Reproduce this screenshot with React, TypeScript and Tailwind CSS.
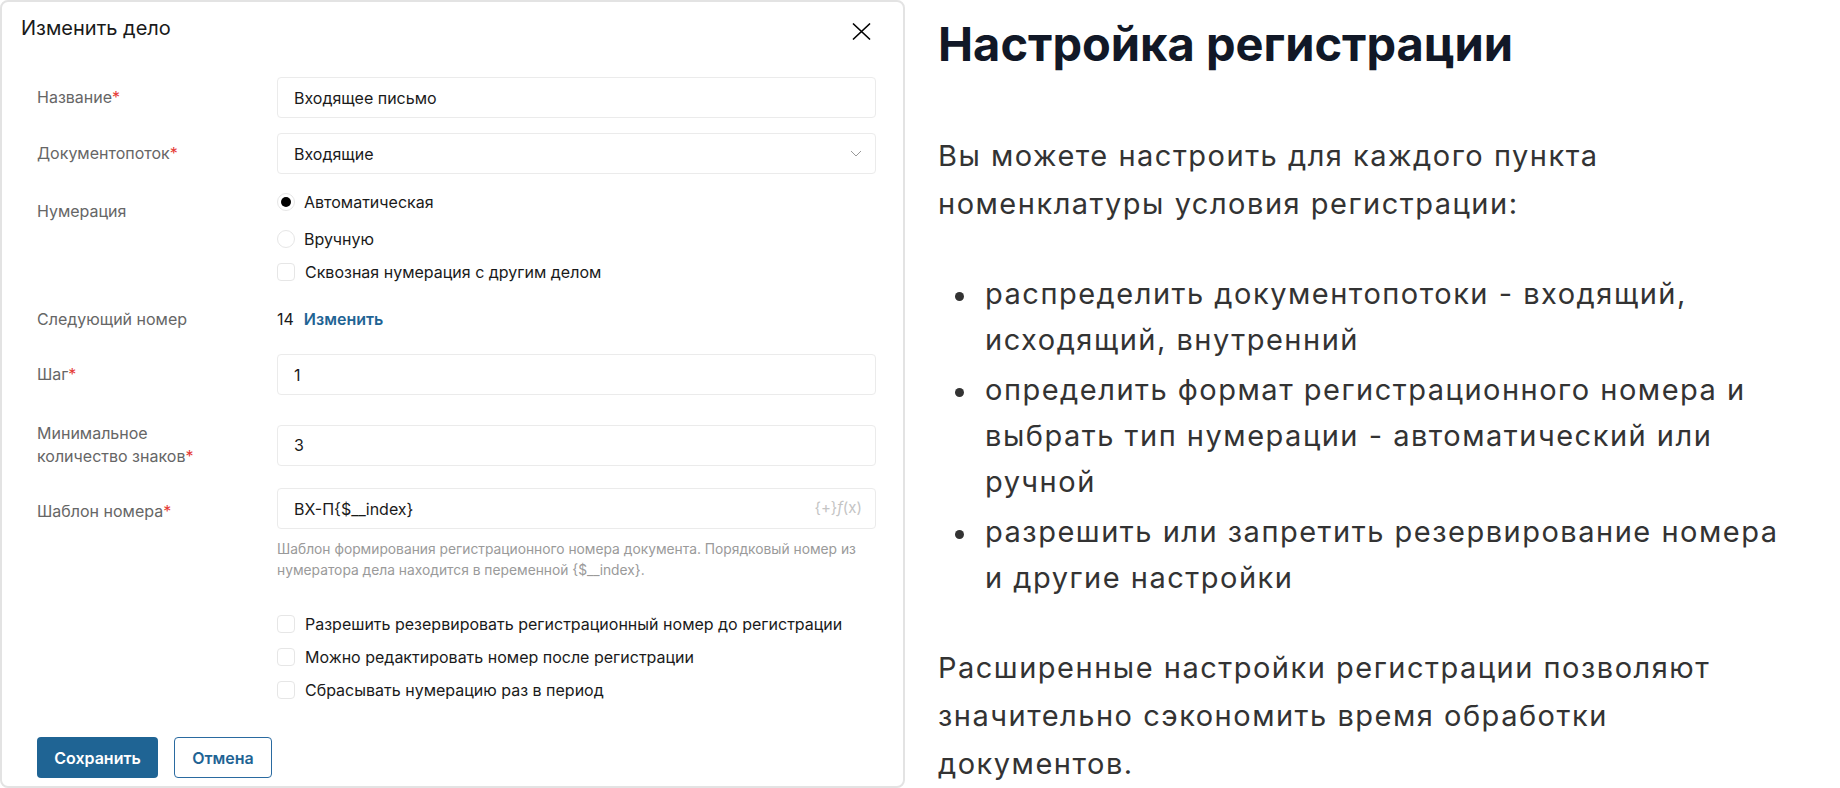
import React from "react";

type FieldProps = {
  label: React.ReactNode;
  required?: boolean;
  className?: string;
  labelClass?: string;
  align?: string;
  children: React.ReactNode;
};

function Field({ label, required, className = "", labelClass = "", align = "items-center", children }: FieldProps) {
  return (
    <div className={`flex ${align} ${className}`}>
      <div className={`w-[240px] shrink-0 text-[16px] leading-[23px] text-[#666666] ${labelClass}`}>
        {label}
        {required && <span className="text-[#e53935]">*</span>}
      </div>
      <div className="min-w-0 flex-1">{children}</div>
    </div>
  );
}

function TextBox({ value, children }: { value: string; children?: React.ReactNode }) {
  return (
    <div className="flex h-[41px] items-center justify-between rounded border border-[#ebebeb] pl-4 pr-[13px] text-[16px] text-[#1a1a1a]">
      <span>{value}</span>
      {children}
    </div>
  );
}

function Check({ label }: { label: string }) {
  return (
    <div className="flex h-6 items-center gap-[10px]">
      <span className="h-[18px] w-[18px] rounded-sm border border-[#e6e6e6] bg-white" />
      <span className="text-[16px] text-[#1a1a1a]">{label}</span>
    </div>
  );
}

function Radio({ label, checked }: { label: string; checked?: boolean }) {
  return (
    <div className="flex h-6 items-center gap-[9px]">
      <span className="flex h-[18px] w-[18px] items-center justify-center rounded-full border border-[#e6e6e6] bg-white">
        {checked && <span className="h-[10px] w-[10px] rounded-full bg-black" />}
      </span>
      <span className="text-[16px] text-[#1a1a1a]">{label}</span>
    </div>
  );
}

const bullets = [
  ["распределить документопотоки - входящий,", "исходящий, внутренний"],
  ["определить формат регистрационного номера и", "выбрать тип нумерации - автоматический или", "ручной"],
  ["разрешить или запретить резервирование номера", "и другие настройки"],
];

export default function App() {
  return (
    <div className="flex h-[788px] w-[1840px] bg-white font-['Inter','Noto_Sans',sans-serif]">
      {/* Модальное окно */}
      <div className="flex h-[788px] w-[905px] shrink-0 flex-col rounded-lg border-2 border-[#e3e3e3] bg-white">
        <div className="flex items-start justify-between pl-[19px] pr-[32px] pt-3">
          <h2 className="text-[20px] leading-[28px] text-[#1a1a1a]">Изменить дело</h2>
          <button className="mt-[9px] text-black">
            <svg width="19" height="17" viewBox="0 0 19 17" fill="none" stroke="currentColor" strokeWidth="1.7" strokeLinecap="round">
              <path d="M1.5 1 17.5 16M17.5 1 1.5 16" />
            </svg>
          </button>
        </div>

        <div className="flex flex-col pl-[35px] pr-[27px]">
          <Field label="Название" required className="mt-[35px]">
            <TextBox value="Входящее письмо" />
          </Field>

          <Field label="Документопоток" required className="mt-[15px]">
            <TextBox value="Входящие">
              <svg width="12" height="7" viewBox="0 0 12 7" fill="none" stroke="#9a9a9a" strokeWidth="1">
                <path d="M1 1l5 5 5-5" />
              </svg>
            </TextBox>
          </Field>

          <Field label="Нумерация" align="items-start" labelClass="pt-[10px]" className="mt-[16px]">
            <Radio label="Автоматическая" checked />
            <div className="mt-[13px]">
              <Radio label="Вручную" />
            </div>
            <div className="mt-[9px]">
              <Check label="Сквозная нумерация с другим делом" />
            </div>
          </Field>

          <Field label="Следующий номер" className="mt-[23px]">
            <div className="flex h-6 items-center gap-[10px] text-[16px]">
              <span className="text-[#1a1a1a]">14</span>
              <a className="font-semibold text-[#1f6494]">Изменить</a>
            </div>
          </Field>

          <Field label="Шаг" required className="mt-[23px]">
            <TextBox value="1" />
          </Field>

          <Field
            label={
              <>
                Минимальное
                <br />
                количество знаков
              </>
            }
            required
            className="mt-[27px]"
          >
            <TextBox value="3" />
          </Field>

          <Field label="Шаблон номера" required align="items-start" labelClass="pt-[12px]" className="mt-[20px]">
            <TextBox value="ВХ-П{$__index}">
              <span className="text-[15px] text-[#c4c4c4]">
                {"{+}"}
                <i>f</i>(x)
              </span>
            </TextBox>
            <p className="mt-[10px] text-[13.8px] leading-[21px] text-[#9a9a9a]">
              Шаблон формирования регистрационного номера документа. Порядковый номер из
              <br />
              нумератора дела находится в переменной {"{$__index}"}.
            </p>
          </Field>

          <div className="ml-[240px] mt-[31px] flex flex-col gap-[9px]">
            <Check label="Разрешить резервировать регистрационный номер до регистрации" />
            <Check label="Можно редактировать номер после регистрации" />
            <Check label="Сбрасывать нумерацию раз в период" />
          </div>

          <div className="mt-[35px] flex gap-4">
            <button className="h-[41px] w-[121px] rounded bg-[#1f6494] text-[16px] font-semibold text-white">
              Сохранить
            </button>
            <button className="h-[41px] w-[98px] rounded border border-[#2a6aa0] bg-white text-[16px] font-semibold text-[#1f6494]">
              Отмена
            </button>
          </div>
        </div>
      </div>

      {/* Описание */}
      <div className="flex-1 pl-[33px] pt-[15px]">
        <h1 className="text-[47px] font-bold leading-[58px] text-[#111827]">Настройка регистрации</h1>
        <p className="mt-[59px] text-[29px] leading-[48px] tracking-[1.5px] text-[#333333]">
          Вы можете настроить для каждого пункта
          <br />
          номенклатуры условия регистрации:
        </p>
        <ul className="mt-[43px] flex flex-col gap-1 text-[29px] leading-[46px] tracking-[1.5px] text-[#333333]">
          {bullets.map((lines, i) => (
            <li key={i} className="flex">
              <span className="flex w-[47px] shrink-0 justify-center pr-[5px] pt-[21px]">
                <span className="h-[9px] w-[9px] rounded-full bg-[#333333]" />
              </span>
              <span>
                {lines.map((l, j) => (
                  <React.Fragment key={j}>
                    {j > 0 && <br />}
                    {l}
                  </React.Fragment>
                ))}
              </span>
            </li>
          ))}
        </ul>
        <p className="mt-[43px] text-[29px] leading-[48px] tracking-[1.5px] text-[#333333]">
          Расширенные настройки регистрации позволяют
          <br />
          значительно сэкономить время обработки
          <br />
          документов.
        </p>
      </div>
    </div>
  );
}
